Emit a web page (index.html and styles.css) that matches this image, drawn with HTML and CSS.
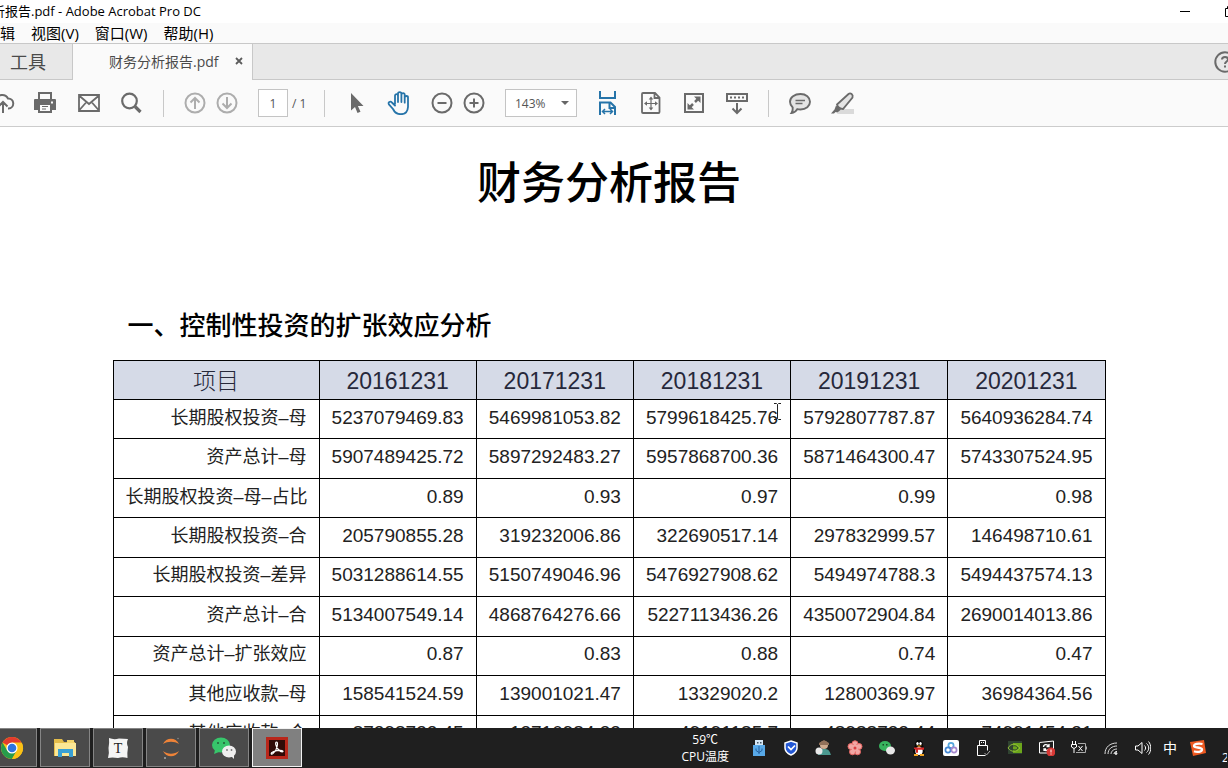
FILE: index.html
```html
<!DOCTYPE html>
<html lang="zh-CN">
<head>
<meta charset="utf-8">
<title>财务分析报告.pdf - Adobe Acrobat Pro DC</title>
<link rel="stylesheet" href="styles.css">
</head>
<body>
<header class="titlebar">
  <span class="titlebar-text">析报告.pdf - Adobe Acrobat Pro DC</span>
  <div class="window-controls">
    <button class="plain" aria-label="最小化"><svg width="12" height="12" viewBox="0 0 12 12"><path d="M1 5.500h10" stroke="#000"/></svg></button>
    <button class="plain restore" aria-label="还原"><svg width="12" height="12" viewBox="0 0 12 12" fill="none" stroke="#000"><path d="M.5 2.500h8v8h-8zM2.500 2.500v-2h8v8h-2"/></svg></button>
  </div>
</header>
<nav class="menubar">
  <button class="plain">编辑</button>
  <button class="plain">视图(V)</button>
  <button class="plain">窗口(W)</button>
  <button class="plain">帮助(H)</button>
</nav>
<div class="tabs">
  <button class="tab tab-tools">工具</button>
  <div class="tab tab-file"><span>财务分析报告.pdf</span>
    <button class="plain tab-close" aria-label="关闭"><svg width="8" height="8" viewBox="0 0 8 8"><path d="M1 1l6 6M7 1L1 7" stroke="#5c5c5c" stroke-width="1.800"/></svg></button>
  </div>
  <button class="plain help" aria-label="帮助"><svg width="24" height="24" viewBox="0 0 24 24" fill="none" stroke="#6a6a6a" stroke-width="2"><circle cx="12" cy="12" r="9.700"/><path d="M9 9.500c0-3.500 6-3.500 6 0 0 2-3 2-3 4.500M12 15.500v2"/></svg></button>
</div>
<div class="toolbar">
  <button class="tool" aria-label="上传"><svg viewBox="0 0 24 24" fill="none" stroke="#6a6a6a" stroke-width="2"><path d="M7 17.500H5.500a4.500 4.500 0 0 1-.5-9A6.500 6.500 0 0 1 17 7.500a5 5 0 0 1 .5 10H17M12 22V11M7.500 15.500L12 11l4.500 4.500"/></svg></button>
  <button class="tool" aria-label="打印"><svg viewBox="0 0 24 24"><path fill="#6a6a6a" d="M4 1h14v7H4zM0 9q0-1 1-1h20q1 0 1 1v10h-4v-4H4v4H0zM4 14h14v8H4z"/><path fill="#fafafa" d="M6 3h10v5H6zM6 14h10v6H6zM17 10.500h2v2h-2z"/><path d="M8 15.500h6M8 18h4" stroke="#6a6a6a" stroke-width="1.200"/></svg></button>
  <button class="tool" aria-label="邮件"><svg viewBox="0 0 24 24" fill="none" stroke="#6a6a6a" stroke-width="1.800"><path d="M2 4h20v16H2zM2 4.500l10 8.500 10-8.500M2 19.500l7.500-8.500M22 19.500L14.500 11"/></svg></button>
  <button class="tool" aria-label="查找"><svg viewBox="0 0 24 24" fill="none" stroke="#6a6a6a"><circle cx="9.500" cy="10" r="7.300" stroke-width="2.200"/><path d="M15 15.500l5.500 5.500" stroke-width="3.200"/></svg></button>
  <span class="sep"></span>
  <div class="pair">
    <button class="tool" aria-label="上一页"><svg viewBox="0 0 24 24" fill="none" stroke="#adadad" stroke-width="2"><circle cx="12" cy="12" r="9.500"/><path d="M12 18V7M7.500 11.500L12 7l4.500 4.500"/></svg></button>
    <button class="tool" aria-label="下一页"><svg viewBox="0 0 24 24" fill="none" stroke="#adadad" stroke-width="2"><circle cx="12" cy="12" r="9.500"/><path d="M12 6v11M7.500 12.500L12 17l4.500-4.500"/></svg></button>
  </div>
  <label class="pages"><input type="text" value="1" aria-label="页码"><span>/ 1</span></label>
  <span class="sep"></span>
  <button class="tool" aria-label="选择"><svg viewBox="0 0 24 24"><path fill="#6a6a6a" d="M7 2v17.500l4-3.500 2.500 6 3-1.300-2.600-5.700h5.600z"/></svg></button>
  <button class="tool" aria-label="抓手"><svg viewBox="0 0 24 24" fill="none" stroke="#2674a9" stroke-width="1.800" stroke-linejoin="round" stroke-linecap="round"><path d="M8 13V4.700c0-2 3-2 3 0V11 2.700c0-2.200 3.400-2.200 3.400 0V11 3.700c0-2.200 3.300-2.200 3.300 0v8V6.500c0-2 3.300-2 3.300 0V16c-.3 4.500-3.200 7.200-7.200 7.200-4.200 0-6.300-2-7.800-5.200L1.900 13.300c-1.200-2.200 1.500-3.500 3-1.800L8 14.500"/></svg></button>
  <div class="pair">
    <button class="tool" aria-label="缩小"><svg viewBox="0 0 24 24" fill="none" stroke="#6a6a6a" stroke-width="2"><circle cx="12" cy="12" r="9.500"/><path d="M7.500 12h9"/></svg></button>
    <button class="tool" aria-label="放大"><svg viewBox="0 0 24 24" fill="none" stroke="#6a6a6a" stroke-width="2"><circle cx="12" cy="12" r="9.500"/><path d="M7.500 12h9M12 7.500v9"/></svg></button>
  </div>
  <select class="zoom" aria-label="缩放"><option>143%</option></select>
  <button class="tool" aria-label="适合宽度"><svg viewBox="0 0 24 24" fill="none" stroke="#2674a9" stroke-width="2"><path d="M4 0v7h15V0M4 24V11.500h10.500L19 16v8M13.500 12v5H19"/><path stroke-width="1.500" d="M6.500 20.500h10M9 18l-2.500 2.500L9 23M14 18l2.500 2.500L14 23"/></svg></button>
  <button class="tool" aria-label="适合页面"><svg viewBox="0 0 24 24" fill="none" stroke="#6a6a6a" stroke-width="1.800"><path d="M3 3q0-1 1-1h12l4.500 4.500V21q0 1-1 1H4q-1 0-1-1zM15.500 2v5h5"/><path stroke-width="1.200" d="M12 7v11M6.500 12.500h11"/><path fill="#6a6a6a" stroke="none" d="M12 5.500l2.300 3H9.700zM12 19.500l2.300-3H9.700zM5 12.500l3-2.300v4.600zM19 12.500l-3-2.300v4.600z"/></svg></button>
  <button class="tool" aria-label="全屏"><svg viewBox="0 0 24 24" fill="none" stroke="#6a6a6a" stroke-width="2"><path d="M3 3h18v18H3z"/><path stroke-width="2.500" d="M13 11l3-3M11 13l-3 3"/><path fill="#6a6a6a" stroke="none" d="M12 5.500h6.500V12zM5.500 12v6.500H12z"/></svg></button>
  <button class="tool" aria-label="阅读模式"><svg viewBox="0 0 24 24" fill="none" stroke="#6a6a6a" stroke-width="2"><path d="M2 3h20v7H2z"/><path stroke-dasharray="2 2" d="M5 6.500h14"/><path d="M12 12v9.500M7.500 17.500L12 22l4.500-4.500"/></svg></button>
  <span class="sep"></span>
  <button class="tool" aria-label="注释"><svg viewBox="0 0 24 24" fill="#e4e4e4" stroke="#6a6a6a" stroke-width="1.900"><path d="M12.500 3C18 3 22 6.300 22 10.800s-4 7.700-9.500 7.700c-1.200 0-2.200-.1-3.200-.4C8 20.500 6 21.800 3.500 22c1-1.500 1.500-3 1.200-5.500C3 15 2 13 2 10.800 2 6.300 6.500 3 12.500 3z"/><path stroke-width="1.500" d="M7.500 9.500h9.500M7.500 12.500h7"/></svg></button>
  <button class="tool" aria-label="高亮"><svg viewBox="0 0 24 24"><path fill="#dadada" d="M9 18h14v5H6z"/><path fill="#e4e4e4" stroke="#6a6a6a" stroke-width="1.800" d="M6 13.500L17.500 3c2-1.500 5 .5 4 3.500L12 18c-2.500 0-5.500-2-6-4.500z"/><path fill="#6a6a6a" d="M5 14.500l5 4-3.500 3-2-.5L3 22.500H0l3.500-4z"/></svg></button>
</div>
<main class="viewer">
  <article class="page">
    <h1>财务分析报告</h1>
    <h2>一、控制性投资的扩张效应分析</h2>
    <table>
      <colgroup><col class="col-name"><col><col><col><col><col></colgroup>
      <thead><tr><th>项目</th><th>20161231</th><th>20171231</th><th>20181231</th><th>20191231</th><th>20201231</th></tr></thead>
      <tbody>
        <tr><th>长期股权投资–母</th><td>5237079469.83</td><td>5469981053.82</td><td>5799618425.76</td><td>5792807787.87</td><td>5640936284.74</td></tr>
        <tr><th>资产总计–母</th><td>5907489425.72</td><td>5897292483.27</td><td>5957868700.36</td><td>5871464300.47</td><td>5743307524.95</td></tr>
        <tr><th>长期股权投资–母–占比</th><td>0.89</td><td>0.93</td><td>0.97</td><td>0.99</td><td>0.98</td></tr>
        <tr><th>长期股权投资–合</th><td>205790855.28</td><td>319232006.86</td><td>322690517.14</td><td>297832999.57</td><td>146498710.61</td></tr>
        <tr><th>长期股权投资–差异</th><td>5031288614.55</td><td>5150749046.96</td><td>5476927908.62</td><td>5494974788.3</td><td>5494437574.13</td></tr>
        <tr><th>资产总计–合</th><td>5134007549.14</td><td>4868764276.66</td><td>5227113436.26</td><td>4350072904.84</td><td>2690014013.86</td></tr>
        <tr><th>资产总计–扩张效应</th><td>0.87</td><td>0.83</td><td>0.88</td><td>0.74</td><td>0.47</td></tr>
        <tr><th>其他应收款–母</th><td>158541524.59</td><td>139001021.47</td><td>13329020.2</td><td>12800369.97</td><td>36984364.56</td></tr>
        <tr><th>其他应收款–合</th><td>87298732.45</td><td>13710984.33</td><td>49191185.7</td><td>48988732.44</td><td>74991454.31</td></tr>
      </tbody>
    </table>
    <svg class="cursor" width="9" height="17" viewBox="0 0 9 17" fill="none" stroke="#222"><path d="M1 .5h2.500l1 1 1-1H8M4.500 1.500v14M1 16.500h2.500l1-1 1 1H8"/></svg>
  </article>
</main>
<footer class="taskbar">
  <div class="apps">
    <button class="app" aria-label="Chrome"><svg viewBox="0 0 24 24"><circle cx="12" cy="12" r="11" fill="#fbc116"/><path fill="#e33b2e" d="M12 12L2.500 6.500A11 11 0 0 1 21.500 6.500H12z"/><path fill="#269c4b" d="M12 23A11 11 0 0 1 2.500 6.500L7.300 14.700 12 17l4.500-2z"/><path fill="#fbc116" d="M12 23l4.800-8.200L16 7h5.900A11 11 0 0 1 12 23z"/><circle cx="12" cy="12" r="5.500" fill="#fff"/><circle cx="12" cy="12" r="4.300" fill="#2f74e0"/></svg></button>
    <button class="app" aria-label="文件资源管理器"><svg viewBox="0 0 24 24"><path fill="#e4bd4b" d="M1 3h8l2 3h11v14H1z"/><path fill="#fbe795" d="M2 7h21v13H2z"/><path fill="#f4d66d" d="M14 4h7v3h-7z"/><path fill="#39a0d3" d="M5 13h15v8h-4v-4H9v4H5z"/></svg></button>
    <button class="app" aria-label="Typora"><svg viewBox="0 0 24 24"><path fill="#f5f5f5" d="M3 2q5 2 10 .5 5 0 9 .5-2 4 0 8-1 6-.5 11-5-1.500-9.500 0-6-1-10 0 1.500-5 .5-10Q3.500 7 3 2z"/><text x="12" y="17" text-anchor="middle" class="glyph-t">T</text></svg></button>
    <button class="app" aria-label="Jupyter"><svg viewBox="0 0 24 24"><path fill="#ee8338" d="M4 8c3-7 13-7 16 0-5-3-11-3-16 0zM4 15c5 3.500 11 3.500 16 0-3 7-13 7-16 0z"/><circle cx="6" cy="22" r="1" fill="#aaa"/><circle cx="19" cy="2.500" r=".8" fill="#888"/></svg></button>
    <button class="app" aria-label="微信"><svg viewBox="0 0 24 24"><ellipse cx="9" cy="9" rx="9" ry="7.500" fill="#37c66b"/><path fill="#37c66b" d="M3 14l-1 4 5-2z"/><ellipse cx="17" cy="15.500" rx="7" ry="6" fill="#eee"/><path fill="#eee" d="M19 20l3 3v-4z"/><g fill="#245d38"><circle cx="6" cy="7" r="1"/><circle cx="12" cy="7" r="1"/></g><g fill="#777"><circle cx="15" cy="14" r=".9"/><circle cx="19.500" cy="14" r=".9"/></g></svg></button>
    <button class="app active" aria-label="Acrobat"><svg viewBox="0 0 24 24"><path fill="#b9271b" d="M1 1h22v22H1z"/><path fill="#300b08" d="M4 4h16v16H4z"/><path fill="none" stroke="#fff" stroke-width="1.200" d="M11.500 6c1.500 0 1.300 4-.7 8C9 17 7 18.700 6.300 18c-1-1.500 4.200-3.700 8.700-3.700 3.500 0 3.500 1.700 2.200 1.700-2 0-5.700-3.500-6.400-7.300-.3-1.700 0-2.700.7-2.700z"/></svg></button>
  </div>
  <div class="tray">
    <div class="cpu"><span>59℃</span><span>CPU温度</span></div>
    <svg class="ti" viewBox="0 0 16 16"><path fill="#d5e7f5" d="M4 0h8v5H4z"/><path fill="#58a9e8" d="M2 5h12v11H2z"/><path stroke="#245f9d" fill="none" d="M8 14V6M5 8.500v2l3 2 3-2v-2"/><path fill="#456" d="M6 2h1.500v1.500H6zM9 2h1.500v1.500H9z"/></svg>
    <svg class="ti" viewBox="0 0 16 16"><path fill="#2458d4" stroke="#fff" stroke-width="1.500" d="M8 1l6 2v5c0 3-2.500 5.500-6 7-3.500-1.500-6-4-6-7V3z"/><path fill="none" stroke="#fff" stroke-width="1.700" d="M5 6.500l3 3 4-4"/></svg>
    <svg class="ti" viewBox="0 0 16 16"><path fill="#4b9990" d="M3 15c0-5 3-7 7-6 4 0 5 3 6 6z"/><circle cx="9" cy="5" r="4" fill="#cfab8f"/><path fill="#92715a" d="M4 3l5-3 5 3v2H4z"/><circle cx="4" cy="11" r="3.500" fill="#e9e9e9"/></svg>
    <svg class="ti" viewBox="0 0 16 16"><g fill="#f1a6a3" stroke="#e96562"><circle cx="8" cy="3.800" r="3"/><circle cx="12" cy="6.500" r="3"/><circle cx="10.500" cy="11.800" r="3"/><circle cx="5.500" cy="11.800" r="3"/><circle cx="4" cy="6.500" r="3"/></g><circle cx="8" cy="8" r="3.500" fill="#f1a6a3"/><circle cx="8" cy="8" r="1.500" fill="#d93d40"/></svg>
    <svg class="ti" viewBox="0 0 16 16"><ellipse cx="6" cy="6" rx="6" ry="5" fill="#37b35e"/><ellipse cx="11.500" cy="10.500" rx="4.500" ry="4" fill="#e8e8e8"/><path fill="#194925" d="M3.500 4H5v1.500H3.500zM7 4h1.500v1.500H7z"/></svg>
    <svg class="ti" viewBox="0 0 16 16"><path fill="#080808" d="M2 12L4 5c0-7 8-7 8 0l2 7-3 3H5z"/><ellipse cx="8" cy="11" rx="3.700" ry="4" fill="#fff"/><path fill="#d92727" d="M3 7.500h10v2.300H7v3H5v-3L3 9z"/><ellipse cx="6.500" cy="3.500" rx="1.200" ry="1.500" fill="#fff"/><ellipse cx="9.500" cy="3.500" rx="1.200" ry="1.500" fill="#fff"/><path fill="#f3a422" d="M5 5.500h6L8 7zM3 14h4v2H3zM9 14h4v2H9z"/></svg>
    <svg class="ti" viewBox="0 0 16 16"><rect width="16" height="16" rx="2" fill="#fff"/><g fill="none" stroke-width="1.700"><circle cx="8" cy="5.500" r="2.600" stroke="#55a7dd"/><circle cx="5" cy="10" r="2.600" stroke="#4487d2"/><circle cx="11" cy="10" r="2.600" stroke="#a688cd"/></g></svg>
    <svg class="ti" viewBox="0 0 16 16" fill="none" stroke="#fff"><path d="M4.500 5V.5h6V5M10.500 15.500h-8V5.500h10v5M6.500 2v1M8.500 2v1"/><path stroke="#aaa" d="M9.500 13l2 2 3.500-4"/></svg>
    <svg class="ti" viewBox="0 0 16 16"><path fill="#304331" d="M1 1h14v13H1z"/><path fill="#6ca61b" d="M6 3h9v10H6z"/><path fill="none" stroke="#8ebd35" d="M1 8c3-5 8-5 12 0-4 5-9 4-12 0z"/><path fill="none" stroke="#304331" d="M4 8c2-3 5-3 7 0-2 3-5 2-7 0z"/></svg>
    <svg class="ti" viewBox="0 0 16 16"><path fill="none" stroke="#fff" d="M.5 2.500l14-1.500v12H.5z"/><path fill="none" stroke="#fff" stroke-width="1.300" d="M4.500 7c0-3 4-3 5-1M10 4v2.500H7.500M9 9.500c-2 2-4 0-4 0M5 11V9h2"/><circle cx="12" cy="12" r="4.500" fill="#d73835"/><path stroke="#fff" d="M12 9.500v3M12 13.500v1"/></svg>
    <svg class="ti" viewBox="0 0 16 16" fill="none" stroke="#fff"><path d="M1.500 1v3M4.500 1v3M.5 4.500h5V7L3 8.500.5 7zM3 8.500V13M7.500 6l4 5M11.500 6l-4 5"/><path stroke="#aaa" d="M7 3.500h7.500v9H5M15.500 6.500v3"/></svg>
    <svg class="ti" viewBox="0 0 16 16" fill="none" stroke="#ddd"><path d="M2 14C2 7 7 3 14 3M5 14c0-5 4-8 9-8M8 14c0-3 3-5 6-5"/><path stroke="#fff" d="M11 14c0-1.500 1.500-2.500 3-2.500"/><circle cx="13" cy="13.500" r="1" fill="#fff"/></svg>
    <svg class="ti" viewBox="0 0 16 16" fill="none" stroke="#fff"><path d="M.5 6h2.500L7 2.500v11L3 10H.5zM9.500 5.500c1.500 1.500 1.500 3.500 0 5M11.500 3.500c3 2.500 3 6.500 0 9M13.500 1.500c3 3.500 3 9.500 0 13"/></svg>
    <div class="ime"><span>中</span>
      <svg class="ti" viewBox="0 0 16 16"><path fill="#ee5a22" d="M0 2l14-2 2 13-13 3z"/><path fill="none" stroke="#fff" stroke-width="2.300" d="M12.500 4C8 3 4 4 4 6s8 1 8 3.500-5 3-8 1.700"/></svg></div>
    <span class="clock">2</span>
  </div>
</footer>
</body>
</html>
```
FILE: styles.css
```css
* { box-sizing: border-box; }
html, body { height: 100%; }
body {
  margin: 0;
  display: flex;
  flex-direction: column;
  overflow: hidden;
  background: #fff;
  color: #000;
  font-family: "Open Sans", "Noto Sans CJK SC", sans-serif;
}
svg { display: block; flex: none; }
button { font: inherit; color: inherit; padding: 0; flex: none; white-space: nowrap; }
.plain { border: 0; background: none; }

.titlebar {
  display: flex;
  flex: none;
  height: 23px;
  font-size: 13px;
  line-height: 23px;
}
.titlebar-text { margin-left: -8px; white-space: nowrap; }
.window-controls { display: flex; align-items: center; gap: 34px; margin-left: auto; margin-right: -9px; }

.menubar {
  display: flex;
  flex: none;
  gap: 16px;
  height: 20px;
  background: #fafafa;
  font-size: 15px;
  line-height: 20px;
}
.menubar > :first-child { margin-left: -15px; }

.tabs {
  display: flex;
  flex: none;
  height: 37px;
  background: #e8e8e8;
  border-top: 1px solid #c8c8c8;
  border-bottom: 1px solid #c8c8c8;
  color: #4a4a4a;
}
.tab { flex: none; border: 0; border-right: 1px solid #c8c8c8; }
.tab-tools { width: 73px; padding-right: 16px; padding-bottom: 2px; background: #e8e8e8; font-size: 18px; }
.tab-file {
  display: flex;
  align-items: center;
  gap: 16px;
  width: 180px;
  margin-bottom: -1px;
  padding-left: 36px;
  padding-bottom: 2px;
  background: #fafafa;
  font-size: 14px;
  white-space: nowrap;
}
.help { margin-left: auto; margin-right: -9px; }

.toolbar {
  display: flex;
  flex: none;
  align-items: center;
  gap: 19px;
  height: 47px;
  background: #fafafa;
  border-bottom: 1px solid #ccc;
  color: #555;
  font-size: 12px;
}
.toolbar > .tool:first-child { margin-left: -9px; }
.tool { width: 24px; height: 24px; border: 0; background: none; }
.tool svg { width: 24px; height: 24px; }
.sep { flex: none; width: 1px; height: 27px; background: #c8c8c8; }
.pair { display: flex; gap: 8px; }
.pages { display: flex; align-items: center; gap: 4px; width: 47px; white-space: nowrap; }
.pages input {
  width: 30px;
  height: 28px;
  padding: 0;
  border: 1px solid #c4c4c4;
  background: #fff;
  color: #555;
  font: inherit;
  text-align: center;
}
.zoom {
  appearance: none;
  width: 72px;
  height: 28px;
  padding: 0 9px;
  border: 1px solid #c4c4c4;
  border-radius: 0;
  color: #555;
  font: inherit;
  background: url("data:image/svg+xml,%3Csvg xmlns='http://www.w3.org/2000/svg' width='8' height='4'%3E%3Cpath d='M0 0h8L4 4z' fill='%23666'/%3E%3C/svg%3E") right 7px center no-repeat #fff;
}

.viewer { flex: 1; min-height: 0; overflow: hidden; padding: 24px 10px 0 0; }
.page {
  position: relative;
  width: 82%;
  max-width: 993px;
  min-width: 960px;
  margin: 0 auto;
  font-family: "Liberation Sans", "Noto Sans CJK SC", sans-serif;
}
h1 { margin: 0; font-size: 44px; line-height: 66px; font-weight: 500; text-align: center; }
h2 { margin: 89px 0 14px; padding-left: 15px; font-size: 26px; line-height: 40px; font-weight: 500; }
table {
  width: 100%;
  height: 395px;
  table-layout: fixed;
  border-collapse: collapse;
}
.col-name { width: 206px; }
th, td {
  height: 39px;
  padding: 0 12px 3px;
  border: 1px solid #000;
  color: #222;
  font-size: 19px;
  line-height: 24px;
  font-weight: 400;
  text-align: right;
  white-space: nowrap;
}
tbody th { font-size: 18px; }
thead th {
  padding: 2px 0 0;
  background: #d5dae7;
  color: #26283a;
  font-size: 23px;
  line-height: 30px;
  font-weight: 300;
  text-align: center;
}
.cursor { position: absolute; left: 660px; top: 252px; }

.taskbar {
  display: flex;
  flex: none;
  justify-content: space-between;
  height: 40px;
  background: #1f1f1f;
  color: #fff;
}
.apps { display: flex; gap: 3px; margin-left: -13px; padding-bottom: 1px; }
.app {
  display: flex;
  align-items: center;
  justify-content: center;
  width: 50px;
  border: 1px solid #858585;
  background: #4a4a4a;
}
.app svg { width: 24px; height: 24px; }
.app.active { border-color: #f2f2f2; background: #808080; }
.glyph-t { font: 14px "Liberation Serif", serif; fill: #222; }
.tray { display: flex; align-items: center; gap: 16px; margin-right: 1px; }
.cpu {
  display: flex;
  flex-direction: column;
  align-items: center;
  margin-right: 6px;
  font-size: 12px;
  line-height: 17px;
  white-space: nowrap;
}
.ti { width: 16px; height: 16px; }
.ime { display: flex; align-items: center; gap: 13px; margin-left: -4px; font-size: 14px; line-height: 16px; }
.clock { align-self: flex-end; width: 5px; overflow: hidden; font-size: 12px; line-height: 20px; }
```
